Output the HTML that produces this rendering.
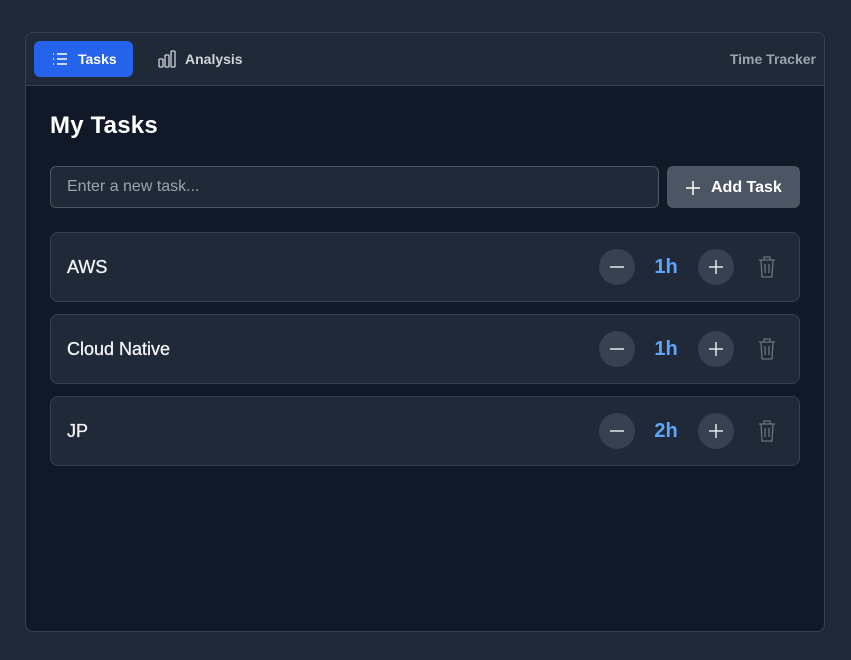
<!DOCTYPE html>
<html><head><style>
*{box-sizing:border-box;margin:0;padding:0}
body{width:851px;height:660px;background:#1e2839;font-family:"Liberation Sans",sans-serif;position:relative;overflow:hidden}
.card{position:absolute;left:25px;top:32px;width:800px;height:600px;background:#111827;border:1px solid #374151;border-radius:8px;overflow:hidden}
.hdr{height:53px;background:#1f2937;border-bottom:1px solid #374151;position:relative}
.tab{position:absolute;top:8px;height:36px;border-radius:6px;display:flex;align-items:center;font-size:14px;font-weight:bold;color:#d1d5db}
.t1{left:8px;width:99px;background:#2563eb;color:#fff;padding-left:18px}
.t2{left:132px;padding-left:0}
.tt{position:absolute;right:8px;top:18px;font-size:14px;font-weight:bold;color:#9ca3af}
h1{position:absolute;left:24px;top:79px;font-size:24px;color:#fff;font-weight:bold;letter-spacing:0.2px}
.inp{position:absolute;left:24px;top:133px;width:609px;height:42px;background:#1f2937;border:1px solid #4b5563;border-radius:6px;color:#9ca3af;font-size:16px;padding:11px 16px}
.btn{position:absolute;left:641px;top:133px;width:133px;height:42px;background:#4b5563;border-radius:6px;color:#fff;font-weight:bold;font-size:16px;display:flex;align-items:center;padding-left:18px;gap:10px;padding-top:1px}
.row{position:absolute;left:24px;width:750px;height:70px;background:#1f2937;border:1px solid #374151;border-radius:8px}
.name{position:absolute;left:16px;top:24px;font-size:18px;color:#f3f4f6;-webkit-text-stroke:0.3px #f3f4f6}
.c{position:absolute;top:16px;width:36px;height:36px;border-radius:50%;background:#374151}
.v{position:absolute;left:590px;width:50px;top:23px;text-align:center;font-size:20px;font-weight:bold;color:#60a5fa}
.tr{position:absolute;left:706px;top:22px}
</style></head><body>
<div class="card">
 <div class="hdr">
  <div class="tab t1"><svg width="16" height="14" viewBox="0 0 16 14" stroke="#fff" stroke-width="1.4" fill="none"><path d="M1 2h1M1 7h1M1 12h1M5 2h10M5 7h10M5 12h10"/></svg><span style="margin-left:10px">Tasks</span></div>
  <div class="tab t2"><svg width="18" height="18" viewBox="0 0 18 18" stroke="#d1d5db" stroke-width="1.3" fill="none"><rect x="1" y="9" width="4" height="8" rx="1"/><rect x="7" y="5" width="4" height="12" rx="1"/><rect x="13" y="1" width="4" height="16" rx="1"/></svg><span style="margin-left:9px">Analysis</span></div>
  <div class="tt">Time Tracker</div>
 </div>
 <h1>My Tasks</h1>
 <div class="inp">Enter a new task...</div>
 <div class="btn"><svg width="16" height="16" stroke="#fff" stroke-width="1.5"><path d="M8 1v14M1 8h14"/></svg>Add Task</div>
 <div class="row" style="top:199px"><div class="name">AWS</div><div class="c" style="left:548px"><svg width="36" height="36" stroke="#e5e7eb" stroke-width="1.5"><path d="M11 18h14"/></svg></div><div class="v">1h</div><div class="c" style="left:647px"><svg width="36" height="36" stroke="#e5e7eb" stroke-width="1.5"><path d="M11 18h14M18 11v14"/></svg></div><svg class="tr" width="20" height="24" viewBox="0 0 20 24" stroke="#6b7280" stroke-width="1.3" fill="none"><path d="M2 5h16M7 5V2h6v3M4 5l1 17h10l1-17M8 9v9M12 9v9"/></svg></div>
 <div class="row" style="top:281px"><div class="name">Cloud Native</div><div class="c" style="left:548px"><svg width="36" height="36" stroke="#e5e7eb" stroke-width="1.5"><path d="M11 18h14"/></svg></div><div class="v">1h</div><div class="c" style="left:647px"><svg width="36" height="36" stroke="#e5e7eb" stroke-width="1.5"><path d="M11 18h14M18 11v14"/></svg></div><svg class="tr" width="20" height="24" viewBox="0 0 20 24" stroke="#6b7280" stroke-width="1.3" fill="none"><path d="M2 5h16M7 5V2h6v3M4 5l1 17h10l1-17M8 9v9M12 9v9"/></svg></div>
 <div class="row" style="top:363px"><div class="name">JP</div><div class="c" style="left:548px"><svg width="36" height="36" stroke="#e5e7eb" stroke-width="1.5"><path d="M11 18h14"/></svg></div><div class="v">2h</div><div class="c" style="left:647px"><svg width="36" height="36" stroke="#e5e7eb" stroke-width="1.5"><path d="M11 18h14M18 11v14"/></svg></div><svg class="tr" width="20" height="24" viewBox="0 0 20 24" stroke="#6b7280" stroke-width="1.3" fill="none"><path d="M2 5h16M7 5V2h6v3M4 5l1 17h10l1-17M8 9v9M12 9v9"/></svg></div>
</div>
</body></html>
